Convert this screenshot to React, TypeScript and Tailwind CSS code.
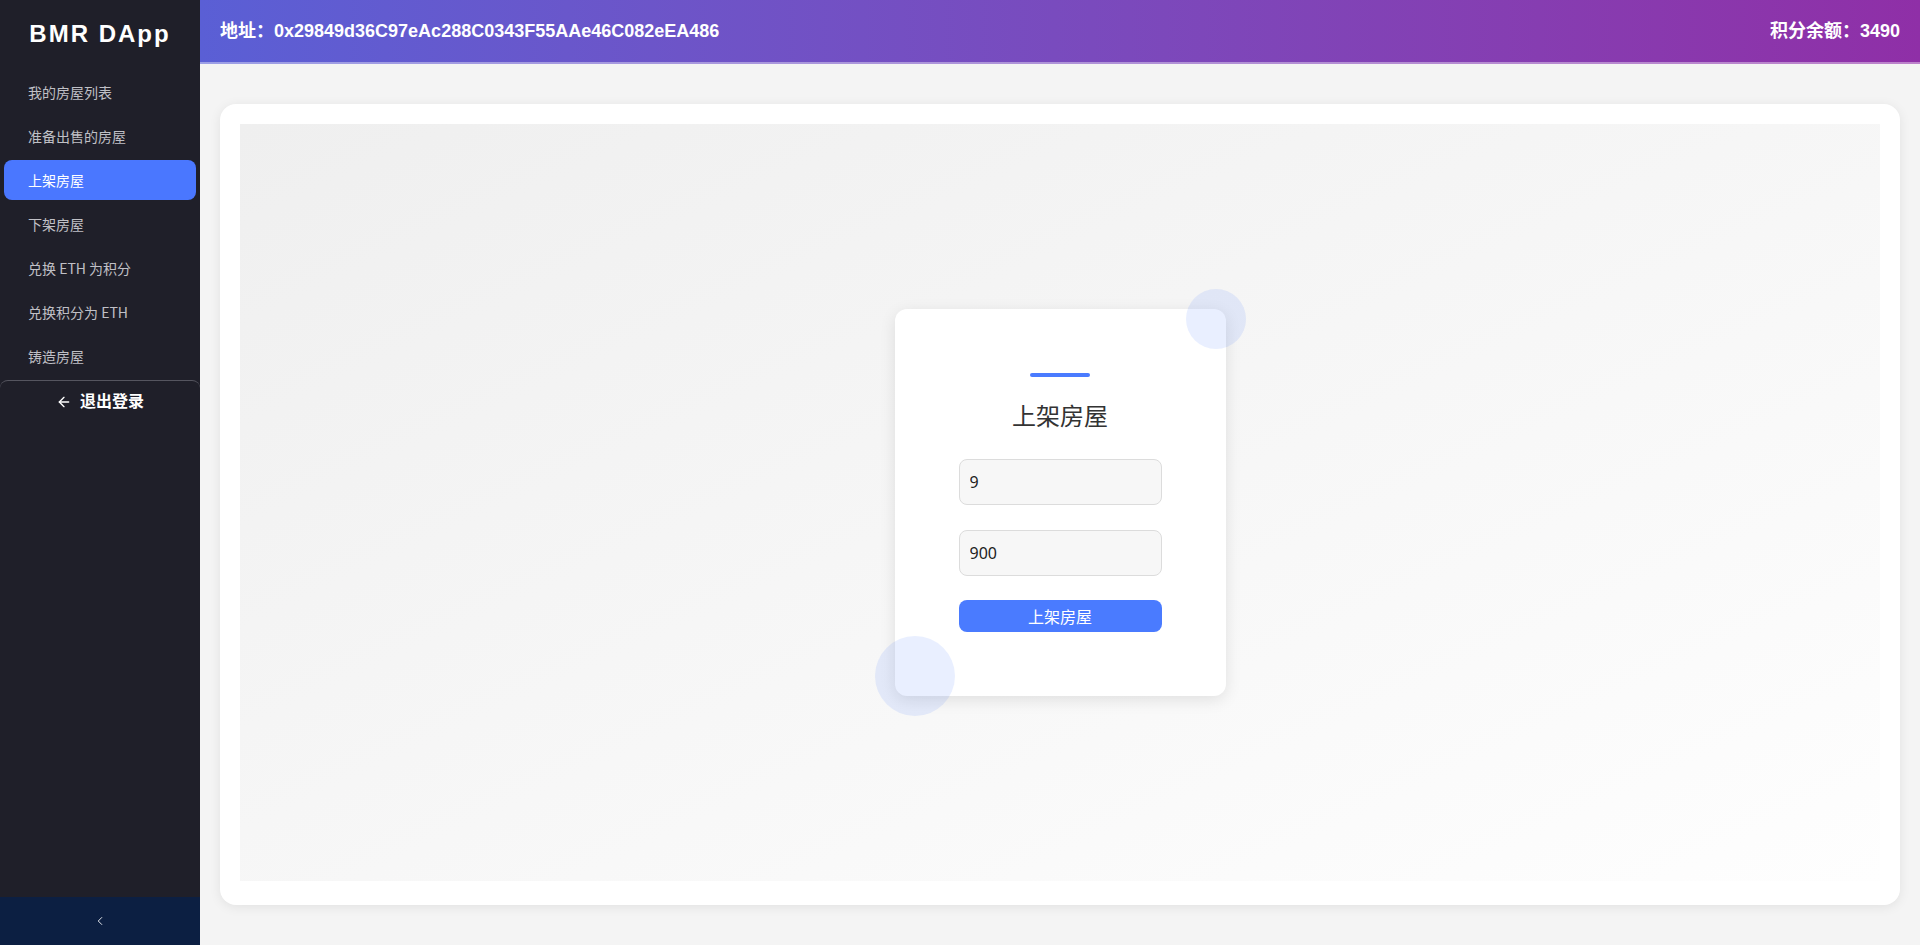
import { ArrowLeft, ChevronLeft } from "lucide-react";

const menuItems = [
  "我的房屋列表",
  "准备出售的房屋",
  "上架房屋",
  "下架房屋",
  "兑换 ETH 为积分",
  "兑换积分为 ETH",
  "铸造房屋",
];

const font = { fontFamily: '"Liberation Sans", "Noto Sans CJK SC", sans-serif' };

const Sidebar = () => {
  return (
    <aside className="flex h-full w-[200px] shrink-0 flex-col bg-[#1f1f29]">
      <div className="flex h-[68px] items-center justify-center">
        <span className="text-[24px] font-bold tracking-[2px] text-white">BMR DApp</span>
      </div>
      <nav className="flex flex-col">
        {menuItems.map((item) => (
          <a
            key={item}
            href="#"
            className={`mx-1 mt-1 flex h-10 items-center rounded-lg pl-6 text-[14px] ${
              item === "上架房屋" ? "bg-[#4a77ff] text-white" : "text-[#c0c0c6]"
            }`}
            style={{ fontFamily: '"Noto Sans CJK SC", sans-serif' }}
          >
            {item}
          </a>
        ))}
      </nav>
      {/* Logout */}
      <div className="mt-1 flex h-[42px] items-center justify-center gap-2 rounded-t-lg border-t border-[#55555f] text-white">
        <ArrowLeft size={16} strokeWidth={2} />
        <span className="text-[16px] font-bold">退出登录</span>
      </div>
      <div className="flex-1" />
      <div className="flex h-12 items-center justify-center bg-[#0c1f42] text-white">
        <ChevronLeft size={14} strokeWidth={1.5} />
      </div>
    </aside>
  );
};

const Header = () => {
  return (
    <header className="flex h-16 shrink-0 items-center justify-between border-b-2 border-white/40 bg-gradient-to-r from-[#5a5fd5] to-[#8f2fa7] pl-5 pr-5 text-[18px] font-bold text-white">
      <span>地址：0x29849d36C97eAc288C0343F55AAe46C082eEA486</span>
      <span>积分余额：3490</span>
    </header>
  );
};

const ListingCard = () => {
  return (
    <div className="relative flex w-[331px] flex-col rounded-xl bg-white px-16 py-16 shadow-[0_4px_16px_rgba(0,0,0,0.1)]">
      <div className="mx-auto h-1 w-[60px] rounded-full bg-[#4a7bff]" />
      <h2
        className="mt-[22px] text-center text-[24px] leading-8 font-normal text-[#333]"
        style={{ fontFamily: '"Noto Sans CJK SC", sans-serif' }}
      >
        上架房屋
      </h2>
      <input
        defaultValue="9"
        className="mt-7 h-[46px] w-full rounded-lg border border-[#dcdcdc] bg-[#f7f7f7] px-[10px] text-[16px] text-[#222] outline-none"
        style={{ fontFamily: '"Noto Sans", sans-serif' }}
      />
      <input
        defaultValue="900"
        className="mt-[25px] h-[46px] w-full rounded-lg border border-[#dcdcdc] bg-[#f7f7f7] px-[10px] text-[16px] text-[#222] outline-none"
        style={{ fontFamily: '"Noto Sans", sans-serif' }}
      />
      <button
        className="mt-6 h-8 w-full rounded-lg bg-[#4a7bff] text-[16px] text-white"
        style={{ fontFamily: '"Noto Sans CJK SC", sans-serif' }}
      >
        上架房屋
      </button>
      {/* decorative circles */}
      <div className="absolute -top-5 -right-5 h-[60px] w-[60px] rounded-full bg-[#4a7bff]/[0.12]" />
      <div className="absolute -bottom-5 -left-5 h-20 w-20 rounded-full bg-[#4a7bff]/[0.12]" />
    </div>
  );
};

const App = () => {
  return (
    <div className="flex h-[945px] w-full overflow-hidden" style={font}>
      <Sidebar />
      <div className="flex min-w-0 flex-1 flex-col">
        <Header />
        <main className="flex flex-1 flex-col bg-[#f4f4f4] px-5 pt-10 pb-10">
          <div className="flex flex-1 flex-col rounded-2xl bg-white px-5 pt-5 pb-6 shadow-[0_2px_12px_rgba(0,0,0,0.08)]">
            <div className="flex flex-1 items-center justify-center bg-gradient-to-br from-[#efefef] to-[#fefefe]">
              <ListingCard />
            </div>
          </div>
        </main>
      </div>
    </div>
  );
};

export default App;
